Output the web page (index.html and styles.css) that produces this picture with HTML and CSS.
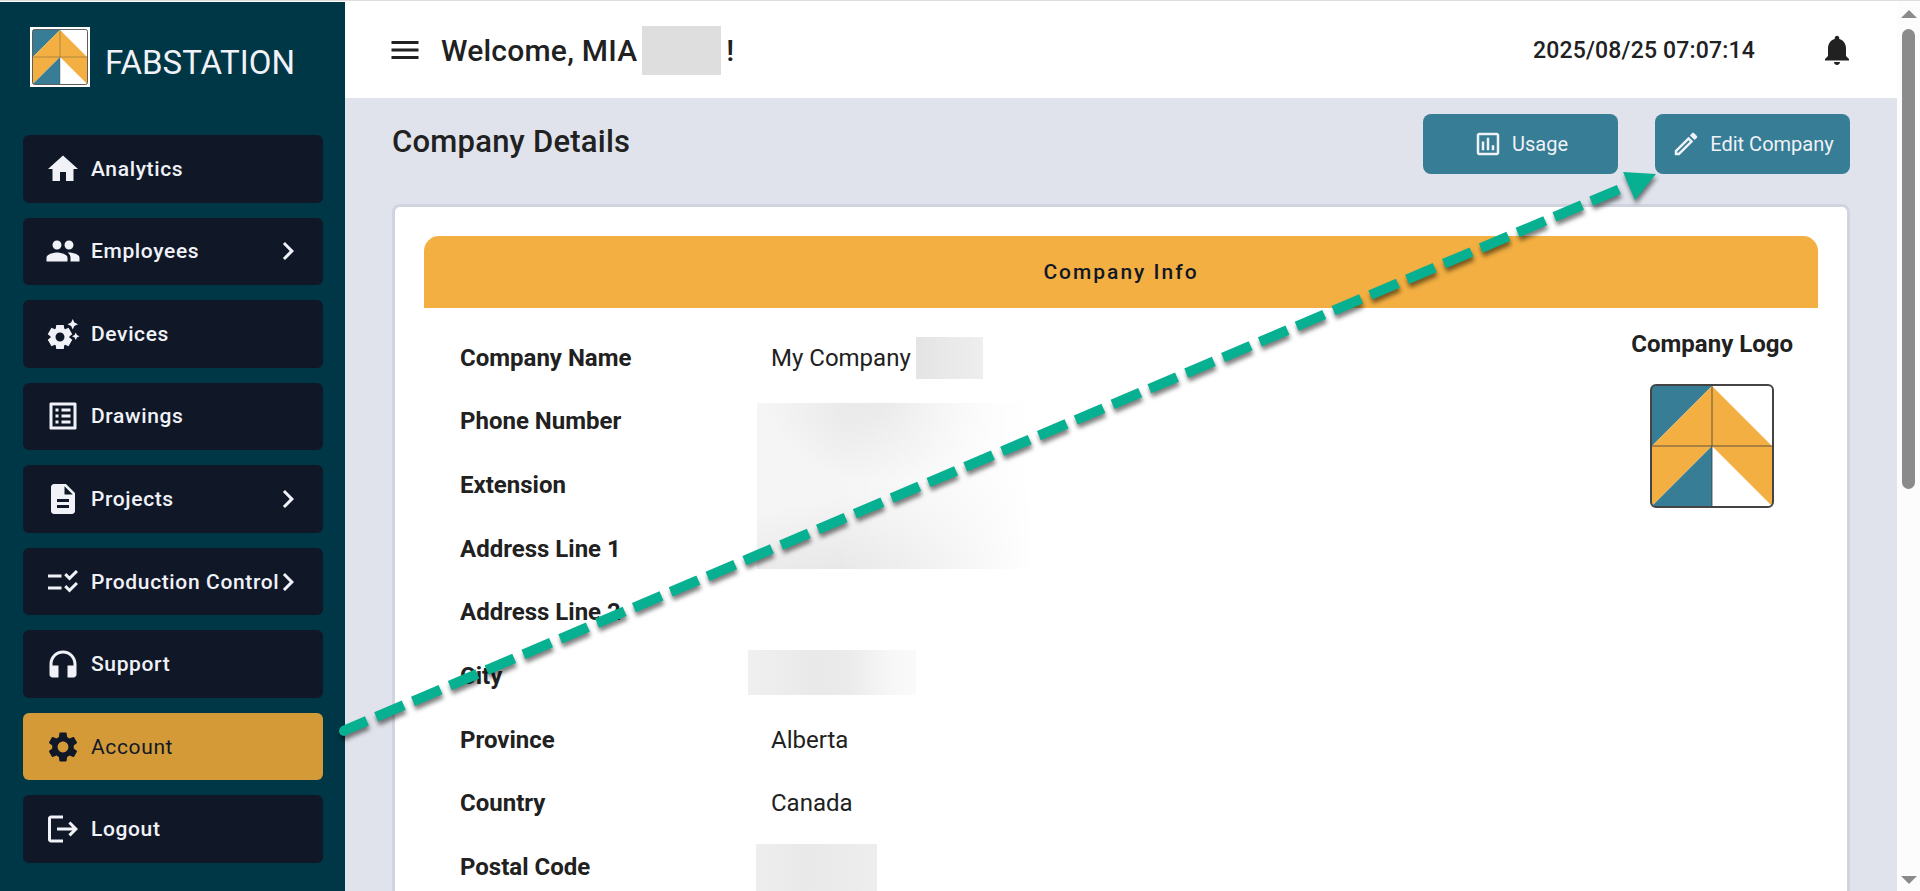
FILE: index.html
```html
<!DOCTYPE html>
<html lang="en">
<head>
  <meta charset="UTF-8" />
  <meta name="viewport" content="width=device-width, initial-scale=1.0"/>
  <title>FabStation - Company Details</title>
  <link rel="stylesheet" href="styles.css">
</head>
<body>
  <svg class="defs" aria-hidden="true">
    <symbol id="logo" viewBox="0 0 124 124">
      <rect x="1" y="1" width="122" height="122" rx="5" fill="#fff"/>
      <path d="M2 2h60L2 62z" fill="#367d95"/>
      <path d="M62 2l60 60v60L62 62 2 122V62z" fill="#f3af41"/>
      <path d="M62 62v60H2z" fill="#367d95"/>
      <path d="M62 2v120M2 62h120" stroke="#3d3d3d" stroke-opacity=".8" fill="none"/>
      <rect x="1" y="1" width="122" height="122" rx="5" fill="none" stroke="#444" stroke-width="2"/>
    </symbol>
    <symbol id="chevron" viewBox="0 0 24 24"><path d="M10 6 8.590 7.410 13.170 12l-4.580 4.590L10 18l6-6z"/></symbol>
  </svg>

  <div class="app">
    <aside class="sidebar">
      <div class="brand">
        <svg class="brand-logo"><use href="#logo"/></svg>
        <span>FABSTATION</span>
      </div>
      <nav class="menu">
        <a href="#" class="menu-item">
          <svg class="icon" viewBox="0 0 24 24"><path d="M10 20v-6h4v6h5v-8h3L12 3 2 12h3v8z"/></svg>
          <span>Analytics</span>
        </a>
        <a href="#" class="menu-item">
          <svg class="icon" viewBox="0 0 24 24"><path d="M16 11c1.660 0 2.990-1.340 2.990-3S17.660 5 16 5c-1.660 0-3 1.340-3 3s1.340 3 3 3zm-8 0c1.660 0 2.990-1.340 2.990-3S9.660 5 8 5C6.340 5 5 6.340 5 8s1.340 3 3 3zm0 2c-2.330 0-7 1.170-7 3.500V19h14v-2.500c0-2.330-4.670-3.500-7-3.500zm8 0c-.290 0-.620.020-.970.050 1.160.840 1.970 1.970 1.970 3.450V19h6v-2.500c0-2.330-4.670-3.500-7-3.500z"/></svg>
          <span>Employees</span>
          <svg class="icon"><use href="#chevron"/></svg>
        </a>
        <a href="#" class="menu-item">
          <svg class="icon" viewBox="0 0 24 24"><path d="M17.410 6.590 15 5.500l2.410-1.090L18.500 2l1.090 2.410L22 5.500l-2.410 1.090L18.500 9l-1.090-2.410zm3.870 6.130L20.500 11l-.780 1.720-1.720.780 1.720.780.780 1.720.780-1.720L23 13.500l-1.720-.780zm-5.040 1.650 1.940 1.470-2.500 4.330-2.240-.940c-.2.130-.420.260-.640.370l-.3 2.400h-5l-.3-2.410c-.220-.110-.430-.230-.640-.370l-2.240.940-2.500-4.330 1.940-1.470c-.010-.110-.010-.240-.010-.360s0-.250.010-.370l-1.940-1.470 2.500-4.330 2.240.940c.2-.130.420-.260.640-.370L7.500 6h5l.3 2.410c.220.110.430.230.640.370l2.240-.940 2.500 4.330-1.940 1.470c.010.120.010.240.010.370s0 .240-.010.360zM13 14c0-1.660-1.340-3-3-3s-3 1.340-3 3 1.340 3 3 3 3-1.340 3-3z"/></svg>
          <span>Devices</span>
        </a>
        <a href="#" class="menu-item">
          <svg class="icon" viewBox="0 0 24 24"><path d="M19 5v14H5V5h14m1.100-2H3.900c-.5 0-.9.4-.9.9v16.200c0 .4.4.9.9.9h16.200c.4 0 .9-.5.9-.9V3.900c0-.5-.5-.9-.9-.9zM11 7h6v2h-6zm0 4h6v2h-6zm0 4h6v2h-6zM7 7h2v2H7zm0 4h2v2H7zm0 4h2v2H7z"/></svg>
          <span>Drawings</span>
        </a>
        <a href="#" class="menu-item">
          <svg class="icon" viewBox="0 0 24 24"><path d="M14 2H6c-1.100 0-1.990.9-1.990 2L4 20c0 1.100.890 2 1.990 2H18c1.100 0 2-.9 2-2V8l-6-6zm2 16H8v-2h8v2zm0-4H8v-2h8v2zm-3-5V3.500L18.500 9H13z"/></svg>
          <span>Projects</span>
          <svg class="icon"><use href="#chevron"/></svg>
        </a>
        <a href="#" class="menu-item">
          <svg class="icon" viewBox="0 0 24 24"><path d="M11 7H2v2h9V7zm0 8H2v2h9v-2zm5.340-4-3.540-3.540 1.410-1.410 2.120 2.120 4.240-4.240L22 5.340 16.340 11zm0 8-3.540-3.540 1.410-1.410 2.120 2.120 4.240-4.240L22 13.340 16.340 19z"/></svg>
          <span>Production Control</span>
          <svg class="icon"><use href="#chevron"/></svg>
        </a>
        <a href="#" class="menu-item">
          <svg class="icon" viewBox="0 0 24 24"><path d="M12 3c-4.970 0-9 4.030-9 9v7c0 1.100.9 2 2 2h4v-8H5v-1c0-3.870 3.130-7 7-7s7 3.130 7 7v1h-4v8h4c1.100 0 2-.9 2-2v-7c0-4.970-4.030-9-9-9z"/></svg>
          <span>Support</span>
        </a>
        <a href="#" class="menu-item active">
          <svg class="icon" viewBox="0 0 24 24"><path d="M19.140 12.940c.040-.3.060-.610.060-.940 0-.320-.020-.640-.070-.940l2.030-1.580c.180-.140.230-.410.120-.610l-1.920-3.320c-.120-.220-.370-.290-.590-.220l-2.390.960c-.5-.380-1.030-.7-1.620-.940l-.360-2.540c-.040-.240-.240-.410-.480-.410h-3.840c-.240 0-.430.170-.470.410l-.360 2.540c-.590.240-1.130.570-1.620.940l-2.390-.960c-.220-.080-.470 0-.590.220L2.740 8.870c-.120.210-.080.470.120.610l2.030 1.580c-.050.3-.090.630-.090.940s.020.640.070.940l-2.030 1.580c-.180.140-.230.410-.120.610l1.920 3.320c.120.220.370.290.590.220l2.390-.960c.5.380 1.030.7 1.620.940l.360 2.540c.050.240.240.410.480.410h3.840c.240 0 .440-.170.470-.410l.360-2.540c.590-.240 1.130-.560 1.620-.940l2.390.960c.220.080.470 0 .590-.220l1.920-3.320c.120-.220.070-.470-.120-.610l-2.010-1.580zM12 15.600c-1.980 0-3.600-1.620-3.600-3.600s1.620-3.600 3.600-3.600 3.600 1.620 3.600 3.600-1.620 3.600-3.600 3.600z"/></svg>
          <span>Account</span>
        </a>
        <a href="#" class="menu-item">
          <svg class="icon" viewBox="0 0 24 24"><path d="M17 7l-1.410 1.410L18.170 11H8v2h10.170l-2.580 2.580L17 17l5-5zM4 5h8V3H4c-1.100 0-2 .9-2 2v14c0 1.100.9 2 2 2h8v-2H4V5z"/></svg>
          <span>Logout</span>
        </a>
      </nav>
    </aside>

    <main class="main">
      <header class="topbar">
        <button class="icon-button" aria-label="Menu">
          <svg class="icon" viewBox="0 0 24 24"><path d="M3 18h18v-2H3v2zm0-5h18v-2H3v2zm0-7v2h18V6H3z"/></svg>
        </button>
        <h1 class="welcome">Welcome, MIA <span class="mask mask-user"></span>!</h1>
        <time class="clock">2025/08/25 07:07:14</time>
        <button class="icon-button" aria-label="Notifications">
          <svg class="icon" viewBox="0 0 24 24"><path d="M12 22c1.100 0 2-.9 2-2h-4c0 1.100.890 2 2 2zm6-6v-5c0-3.070-1.640-5.640-4.500-6.320V4c0-.830-.670-1.500-1.500-1.500s-1.500.670-1.500 1.500v.680C7.630 5.360 6 7.920 6 11v5l-2 2v1h16v-1l-2-2z"/></svg>
        </button>
      </header>

      <div class="content">
        <div class="page-head">
          <h2>Company Details</h2>
          <div class="actions">
            <button class="btn">
              <svg class="btn-icon" viewBox="0 0 24 24"><path d="M9 17H7v-7h2v7zm4 0h-2V7h2v10zm4 0h-2v-4h2v4zm2 2H5V5h14v14zm0-16H5c-1.100 0-2 .9-2 2v14c0 1.100.9 2 2 2h14c1.100 0 2-.9 2-2V5c0-1.100-.9-2-2-2z"/></svg>
              Usage
            </button>
            <button class="btn">
              <svg class="btn-icon" viewBox="0 0 24 24"><path d="M14.060 9.020l.920.920L5.920 19H5v-.920l9.060-9.060M17.660 3c-.250 0-.510.1-.7.290l-1.830 1.830 3.750 3.750 1.830-1.830c.390-.390.390-1.020 0-1.410l-2.340-2.340c-.2-.2-.450-.290-.710-.290zm-3.600 3.190L3 17.250V21h3.750L17.810 9.940l-3.750-3.750z"/></svg>
              Edit Company
            </button>
          </div>
        </div>

        <section class="card">
          <h3 class="card-title">Company Info</h3>
          <div class="card-body">
            <dl class="details">
              <dt>Company Name</dt>
              <dd>My Company <span class="mask mask-name"></span></dd>
              <dt>Phone Number</dt>
              <dd><span class="mask mask-contact"></span></dd>
              <dt>Extension</dt>
              <dd></dd>
              <dt>Address Line 1</dt>
              <dd></dd>
              <dt>Address Line 2</dt>
              <dd></dd>
              <dt>City</dt>
              <dd><span class="mask mask-city"></span></dd>
              <dt>Province</dt>
              <dd>Alberta</dd>
              <dt>Country</dt>
              <dd>Canada</dd>
              <dt>Postal Code</dt>
              <dd><span class="mask mask-postal"></span></dd>
            </dl>
            <figure class="company-logo">
              <figcaption>Company Logo</figcaption>
              <svg><use href="#logo"/></svg>
            </figure>
          </div>
        </section>
      </div>
    </main>

    <div class="scrollbar" aria-hidden="true">
      <svg width="16" height="8" viewBox="0 0 16 8"><path d="M8 0l8 8H0z"/></svg>
      <div class="track"><div class="thumb"></div></div>
      <svg width="16" height="8" viewBox="0 0 16 8"><path d="M0 0h16L8 8z"/></svg>
    </div>
  </div>

  <!-- pointer from Account to Edit Company -->
  <svg class="pointer" width="1920" height="891" viewBox="0 0 1920 891" aria-hidden="true">
    <circle cx="344" cy="731" r="5"/>
    <path class="pointer-line" d="M343 731L1620 189"/>
    <path d="M1623 172l33 2-21 26z"/>
  </svg>
</body>
</html>
```

FILE: styles.css
```css
* {
  box-sizing: border-box;
}
body {
  margin: 0;
  height: 100vh;
  overflow: hidden;
  position: relative;
  font-family: Roboto, "Liberation Sans", sans-serif;
  color: #212121;
  background: #fff;
}
h1, h2, h3, dl, dd, figure {
  margin: 0;
}
.defs {
  display: none;
}
.app {
  display: flex;
  height: 100vh;
  border-top: 1px solid #ddd;
  padding-top: 1px;
}
.icon {
  width: 36px;
  height: 36px;
  flex: none;
  fill: currentColor;
}

/* sidebar */
.sidebar {
  width: 345px;
  flex: none;
  padding: 25px 22px 0 23px;
  background: #003746;
}
.brand {
  display: flex;
  gap: 15px;
  height: 60px;
  margin: 0 0 48px 7px;
  font-size: 33px;
  line-height: 72px;
  color: #f0f2f8;
}
.brand-logo {
  width: 60px;
  height: 60px;
  padding: 2px;
  background: #fff;
}
.menu {
  display: grid;
  grid-template-columns: minmax(0, 1fr);
  grid-auto-rows: 1fr;
  gap: 15px;
  height: 728px;
}
.menu-item {
  display: flex;
  align-items: center;
  gap: 10px;
  padding: 0 17px 0 22px;
  border-radius: 6px;
  background: #101828;
  color: #f0f2f8;
  font-size: 21px;
  font-weight: 500;
  letter-spacing: 0.03em;
  text-decoration: none;
}
.menu-item span {
  flex: 1;
  min-width: 0;
  white-space: nowrap;
}
.menu-item span + .icon {
  margin-left: -10px;
}
.menu-item.active {
  background: #d39a37;
  color: #101828;
  font-weight: 400;
}

/* top bar */
.main {
  flex: 1;
  min-width: 0;
  display: flex;
  flex-direction: column;
  overflow: hidden;
  background: #e0e3eb;
}
.topbar {
  display: flex;
  align-items: center;
  flex: none;
  height: 96px;
  padding: 0 42px;
  background: #fff;
  letter-spacing: 0.0075em;
}
.icon-button {
  display: flex;
  padding: 0;
  border: 0;
  background: none;
  color: #212121;
  cursor: pointer;
}
.welcome {
  display: flex;
  align-items: center;
  gap: 5px;
  margin: 0 auto 0 18px;
  font-size: 30px;
  font-weight: 500;
  letter-spacing: 0.0075em;
}
.clock {
  margin-right: 64px;
  font-size: 23px;
  font-weight: 500;
  letter-spacing: 0.0075em;
}

/* page */
.content {
  padding: 16px 47px 0;
}
.page-head {
  display: flex;
  justify-content: space-between;
  height: 60px;
  margin-bottom: 30px;
}
.page-head h2 {
  font-size: 31px;
  line-height: 56px;
  font-weight: 500;
  letter-spacing: 0.0075em;
}
.actions {
  display: flex;
  gap: 37px;
}
.btn {
  display: flex;
  align-items: center;
  justify-content: center;
  gap: 9px;
  width: 195px;
  padding: 0;
  border: 0;
  border-radius: 8px;
  background: #367d95;
  color: #f0f2f8;
  font-family: inherit;
  font-size: 20px;
  white-space: nowrap;
  cursor: pointer;
}
.btn-icon {
  width: 30px;
  height: 30px;
  fill: currentColor;
}
.card {
  padding: 29px 29px 48px;
  border: 3px solid #d0d4df;
  border-radius: 8px;
  background: #fff;
}
.card-title {
  height: 72px;
  border-radius: 15px 15px 0 0;
  background: #f3af41;
  color: #101828;
  font-size: 21px;
  line-height: 72px;
  font-weight: 500;
  letter-spacing: 2px;
  text-align: center;
}
.card-body {
  display: flex;
  justify-content: space-between;
  padding: 18px 25px 0 36px;
}
.details {
  display: grid;
  grid-template-columns: 311px auto;
  grid-auto-rows: 1fr;
  height: 573px;
  align-items: center;
  font-size: 24px;
}
.details dt {
  font-weight: 700;
}
.details dd {
  display: flex;
  align-items: center;
  gap: 5px;
  height: 100%;
  position: relative;
}
.company-logo {
  font-size: 24px;
  font-weight: 700;
  text-align: center;
}
.company-logo figcaption {
  line-height: 36px;
  margin-bottom: 22px;
}
.company-logo svg {
  width: 124px;
  height: 124px;
}

/* hidden values */
.mask {
  background: #dedede;
}
.mask-user {
  width: 79px;
  height: 49px;
}
.mask-name {
  width: 67px;
  height: 42px;
  background: linear-gradient(90deg, #e4e4e4, #eee);
}
.mask-contact {
  position: absolute;
  left: -14px;
  top: 13px;
  width: 275px;
  height: 166px;
  background:
    linear-gradient(90deg, transparent 30%, #fff 100%),
    radial-gradient(closest-side, #e4e4e4, transparent) 10px -80px / 240px 160px no-repeat,
    linear-gradient(170deg, #f5f5f5 20%, #f5f5f5 50%, #e2e2e2);
}
.mask-city {
  position: absolute;
  left: -23px;
  top: 6px;
  width: 168px;
  height: 45px;
  background: linear-gradient(90deg, #f0f0f0, #e9e9e9 40%, #ebebeb 60%, #f7f7f7 85%, #fafafa);
}
.mask-postal {
  position: absolute;
  left: -15px;
  top: 9px;
  width: 121px;
  height: 47px;
  background: linear-gradient(90deg, #eee, #e9e9e9 40%, #ededed);
}

/* scrollbar */
.scrollbar {
  display: flex;
  flex-direction: column;
  align-items: center;
  flex: none;
  width: 23px;
  padding: 8px 0 7px;
  background: #fcfcfc;
  fill: #8b8b8b;
}
.track {
  flex: 1;
  padding: 11px 0;
}
.thumb {
  width: 13px;
  height: 460px;
  border-radius: 7px;
  background: #8b8b8b;
}

.pointer {
  position: absolute;
  left: 0;
  top: 0;
  fill: #06b091;
  pointer-events: none;
  filter: drop-shadow(1px 4px 2px rgba(0, 0, 0, .5));
}
.pointer-line {
  fill: none;
  stroke: #06b091;
  stroke-width: 10;
  stroke-dasharray: 30 10;
  stroke-dashoffset: 4;
}
```
